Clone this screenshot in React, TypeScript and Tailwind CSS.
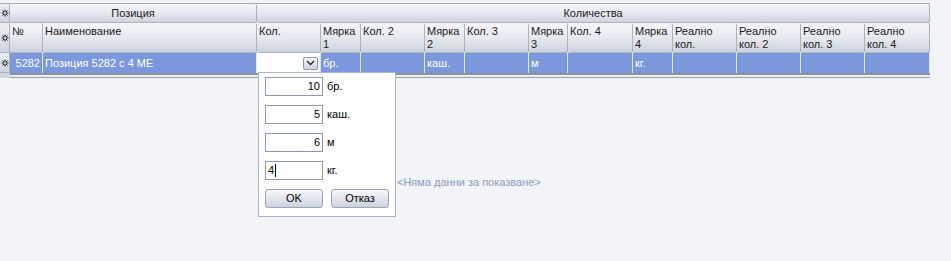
import React from "react";

const gridCols =
  "grid grid-cols-[10px_33px_214px_64px_40px_64px_40px_64px_39px_65px_40px_64px_64px_64px_65px]";

const hdr =
  "bg-gradient-to-b from-[#f4f6f9] via-[#e6e9ef] to-[#cdd3de] border-r border-b border-[#aab2c0] rounded-[2px] text-[#1b1b1b]";

function Star() {
  return (
    <div className="h-full flex items-center justify-center bg-gradient-to-b from-[#eceef2] to-[#cfd4dd] border-r border-b border-[#aab2c0]">
      <svg width="8" height="8" viewBox="0 0 8 8">
        <g stroke="#111" strokeWidth="1" fill="none">
          <path d="M4 0.5 V7.5" />
          <path d="M0.5 4 H7.5" />
          <path d="M1.5 1.5 L6.5 6.5" />
          <path d="M6.5 1.5 L1.5 6.5" />
        </g>
        <circle cx="4" cy="4" r="1" fill="#fff" />
      </svg>
    </div>
  );
}

function Chevron() {
  return (
    <div className="w-[15px] h-[13px] rounded-[2px] border border-[#8e98ab] bg-gradient-to-b from-[#f7f8fa] to-[#cdd3de] flex items-center justify-center">
      <svg width="9" height="6" viewBox="0 0 9 6">
        <path d="M1 1 L4.5 4.5 L8 1" fill="none" stroke="#222" strokeWidth="1.3" />
      </svg>
    </div>
  );
}

export default function App() {
  const secondHeaders: string[][] = [
    ["№"],
    ["Наименование"],
    ["Кол."],
    ["Мярка", "1"],
    ["Кол. 2"],
    ["Мярка", "2"],
    ["Кол. 3"],
    ["Мярка", "3"],
    ["Кол. 4"],
    ["Мярка", "4"],
    ["Реално", "кол."],
    ["Реално", "кол. 2"],
    ["Реално", "кол. 3"],
    ["Реално", "кол. 4"],
  ];
  const rowVals = ["5282", "Позиция 5282 с 4 МЕ", "", "бр.", "", "каш.", "", "м", "", "кг.", "", "", "", ""];

  return (
    <div
      className="relative w-[951px] h-[261px] bg-[#f2f4f7] overflow-hidden text-[11px]"
      style={{ fontFamily: '"Liberation Sans", Arial, sans-serif' }}
    >
      <div className="pt-[3px]">
        <div className="w-[930px] border-t border-[#a3abb9]">
          {/* header row 1 */}
          <div className={`${gridCols} h-[19px]`}>
            <Star />
            <div className={`${hdr} col-span-2 flex items-center justify-center`}>Позиция</div>
            <div className={`${hdr} col-span-12 flex items-center justify-center`}>Количества</div>
          </div>
          {/* header row 2 */}
          <div className={`${gridCols} h-[30px]`}>
            <Star />
            {secondHeaders.map((h, i) => (
              <div key={i} className={`${hdr} pl-[2px] pt-[2px] leading-[13px]`}>
                {h.map((l, j) => (
                  <div key={j}>{l}</div>
                ))}
              </div>
            ))}
          </div>
          {/* data row */}
          <div className={`${gridCols} h-[20px]`}>
            <Star />
            {rowVals.map((v, i) =>
              i === 2 ? (
                <div key={i} className="bg-white border-r border-[#d8e0f4] flex items-center justify-end pr-[2px]">
                  <Chevron />
                </div>
              ) : (
                <div
                  key={i}
                  className={`bg-[#7b97dd] border-r border-[#dfe6f7] text-white flex items-center px-[2px] ${
                    i === 0 ? "justify-end" : ""
                  }`}
                >
                  {v}
                </div>
              )
            )}
          </div>
          {/* scroll line */}
          <div className="flex h-[5px]">
            <div className="w-[10px] bg-[#cfd4dd]" />
            <div className="flex-1 border-t-2 border-[#8c929c] border-b border-b-[#9aa0aa] bg-[#eef0f3]" />
          </div>
        </div>
        <div className="pl-[397px] pt-[96px] text-[#8b9bbb]">&lt;Няма данни за показване&gt;</div>
      </div>

      {/* popup editor */}
      <div className="absolute left-[258px] top-[72px] w-[138px] h-[145px] bg-white border border-[#a9b4c6] pl-[6px] pt-[4px]">
        {[
          ["10", "бр."],
          ["5", "каш."],
          ["6", "м"],
          ["4", "кг."],
        ].map(([v, u], i) => (
          <div key={i} className="flex items-center h-[19px] mb-[9px]">
            <div
              className={`w-[58px] h-[19px] border border-[#8f9aad] bg-white flex items-center text-black px-[2px] ${
                i === 3 ? "justify-start" : "justify-end"
              }`}
            >
              {v}
              {i === 3 && <span className="inline-block w-px h-[13px] bg-black ml-px" />}
            </div>
            <span className="ml-[4px] text-black">{u}</span>
          </div>
        ))}
        <div className="flex gap-[8px]">
          <div className="w-[58px] h-[19px] rounded-[3px] border border-[#9ba5b6] bg-gradient-to-b from-[#f7f8fa] to-[#ccd2dd] flex items-center justify-center text-black">
            OK
          </div>
          <div className="w-[58px] h-[19px] rounded-[3px] border border-[#9ba5b6] bg-gradient-to-b from-[#f7f8fa] to-[#ccd2dd] flex items-center justify-center text-black">
            Отказ
          </div>
        </div>
      </div>
    </div>
  );
}
